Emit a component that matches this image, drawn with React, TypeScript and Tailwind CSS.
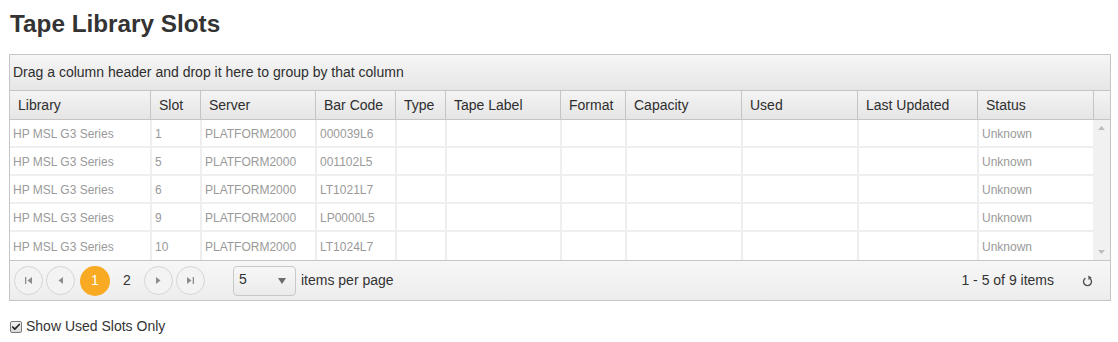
import { Check } from "lucide-react";

interface Slot {
  library: string;
  slot: string;
  server: string;
  barCode: string;
  status: string;
}

const columns = [
  { title: "Library", w: "w-[140px]" },
  { title: "Slot", w: "w-[50px]" },
  { title: "Server", w: "w-[115px]" },
  { title: "Bar Code", w: "w-[80px]" },
  { title: "Type", w: "w-[50px]" },
  { title: "Tape Label", w: "w-[115px]" },
  { title: "Format", w: "w-[65px]" },
  { title: "Capacity", w: "w-[116px]" },
  { title: "Used", w: "w-[116px]" },
  { title: "Last Updated", w: "w-[120px]" },
  { title: "Status", w: "w-[116px]" },
];

const rows: Slot[] = [
  { library: "HP MSL G3 Series", slot: "1", server: "PLATFORM2000", barCode: "000039L6", status: "Unknown" },
  { library: "HP MSL G3 Series", slot: "5", server: "PLATFORM2000", barCode: "001102L5", status: "Unknown" },
  { library: "HP MSL G3 Series", slot: "6", server: "PLATFORM2000", barCode: "LT1021L7", status: "Unknown" },
  { library: "HP MSL G3 Series", slot: "9", server: "PLATFORM2000", barCode: "LP0000L5", status: "Unknown" },
  { library: "HP MSL G3 Series", slot: "10", server: "PLATFORM2000", barCode: "LT1024L7", status: "Unknown" },
];

function PagerButton({ children }: { children: React.ReactNode }) {
  return (
    <div className="w-[29px] h-[29px] rounded-full border border-[#d5d5d5] bg-[#f3f3f3] flex items-center justify-center text-[#8c8c8c]">
      {children}
    </div>
  );
}

export default function App() {
  const cellValues = (r: Slot) => [r.library, r.slot, r.server, r.barCode, "", "", "", "", "", "", r.status];

  return (
    <div className="font-['Liberation_Sans',Arial,sans-serif] text-[#333] bg-white w-[1118px] h-[342px]">
      <h1 className="ml-[10px] pt-[10px] text-[24.3px] leading-[28px] font-bold text-[#333]">Tape Library Slots</h1>

      {/* grid */}
      <div className="mt-[16px] ml-[9px] w-[1102px] border border-[#c5c5c5]">
        <div className="h-[36px] flex items-center pl-[3px] text-[14px] text-[#2e2e2e] border-b border-[#c5c5c5] bg-linear-to-b from-[#f6f6f6] to-[#e6e6e6]">
          Drag a column header and drop it here to group by that column
        </div>

        {/* header row */}
        <div className="flex h-[29px] border-b border-[#c5c5c5] bg-linear-to-b from-[#f4f4f4] to-[#e5e5e5] text-[14px] text-[#2e2e2e]">
          {columns.map((c, i) => (
            <div
              key={c.title}
              className={`${c.w} shrink-0 flex items-center pl-[8px] pt-[1px] ${i > 0 ? "border-l border-[#c5c5c5]" : ""}`}
            >
              {c.title}
            </div>
          ))}
          <div className="w-[17px] shrink-0 border-l border-[#c5c5c5]" />
        </div>

        {/* body */}
        <div className="flex h-[140px]">
          <div className="flex flex-col">
            {rows.map((r) => (
              <div key={r.slot} className="flex h-[28px] border-b-2 border-[#eeeeee] last:border-b-0 text-[12px] text-[#9a9a9a] bg-white">
                {cellValues(r).map((v, i) => (
                  <div
                    key={i}
                    className={`${columns[i].w} shrink-0 flex items-center pl-[3px] pt-[1px] ${i > 0 ? "border-l-2 border-[#eeeeee]" : ""}`}
                  >
                    {v}
                  </div>
                ))}
              </div>
            ))}
          </div>
          <div className="w-[17px] shrink-0 bg-[#f1f1f1] flex flex-col items-center justify-between py-[6px]">
            <svg width="7" height="4" viewBox="0 0 7 4">
              <path d="M3.5 0 L7 4 L0 4 Z" fill="#bdbdbd" />
            </svg>
            <svg width="7" height="4" viewBox="0 0 7 4">
              <path d="M0 0 L7 0 L3.5 4 Z" fill="#bdbdbd" />
            </svg>
          </div>
        </div>

        {/* pager */}
        <div className="h-[40px] border-t border-[#c5c5c5] bg-linear-to-b from-[#f7f7f7] to-[#ededed] flex items-center pl-[4px] pr-[17px] text-[14px] text-[#333]">
          <div className="flex items-center gap-[3px]">
            <PagerButton>
              <svg width="7" height="7" viewBox="0 0 7 7">
                <rect x="0" y="0" width="1.3" height="7" fill="currentColor" />
                <path d="M7 0 L2.5 3.5 L7 7 Z" fill="currentColor" />
              </svg>
            </PagerButton>
            <PagerButton>
              <svg width="5" height="7" viewBox="0 0 5 7">
                <path d="M5 0 L0.5 3.5 L5 7 Z" fill="currentColor" />
              </svg>
            </PagerButton>
            <div className="w-[30px] h-[30px] rounded-full bg-[#f8aa22] text-white flex items-center justify-center ml-[2px]">1</div>
            <div className="w-[28px] h-[30px] flex items-center justify-center">2</div>
            <PagerButton>
              <svg width="5" height="7" viewBox="0 0 5 7">
                <path d="M0 0 L4.5 3.5 L0 7 Z" fill="currentColor" />
              </svg>
            </PagerButton>
            <PagerButton>
              <svg width="7" height="7" viewBox="0 0 7 7">
                <path d="M0 0 L4.5 3.5 L0 7 Z" fill="currentColor" />
                <rect x="5.7" y="0" width="1.3" height="7" fill="currentColor" />
              </svg>
            </PagerButton>
          </div>

          <div className="ml-[28px] w-[63px] h-[30px] rounded-[4px] border border-[#c8c8c8] bg-linear-to-b from-[#f7f7f7] to-[#ebebeb] flex items-center justify-between pl-[5px] pr-[9px]">
            <span className="-mt-[3px]">5</span>
            <svg width="8" height="6" viewBox="0 0 8 6">
              <path d="M0 0 L8 0 L4 6 Z" fill="#6b6b6b" />
            </svg>
          </div>
          <span className="ml-[5px]">items per page</span>

          <span className="ml-auto">1 - 5 of 9 items</span>
          <svg className="ml-[28px]" width="11" height="12" viewBox="0 0 11 12">
            <path d="M7.6 3.2 A4 4 0 1 1 3.4 3.2" fill="none" stroke="#555" strokeWidth="1.4" />
            <path d="M6.2 0.6 L9.6 2.4 L6.6 5 Z" fill="#555" />
          </svg>
        </div>
      </div>

      {/* checkbox */}
      <label className="flex items-center mt-[15px] ml-[10px] text-[14px] text-[#333]">
        <span className="w-[12px] h-[12px] border border-[#7a7a7a] rounded-[2px] bg-linear-to-b from-[#f2f2f2] to-[#d8d8d8] flex items-center justify-center">
          <Check className="w-[10px] h-[10px] text-[#222]" strokeWidth={4} />
        </span>
        <span className="ml-[4px]">Show Used Slots Only</span>
      </label>
    </div>
  );
}
